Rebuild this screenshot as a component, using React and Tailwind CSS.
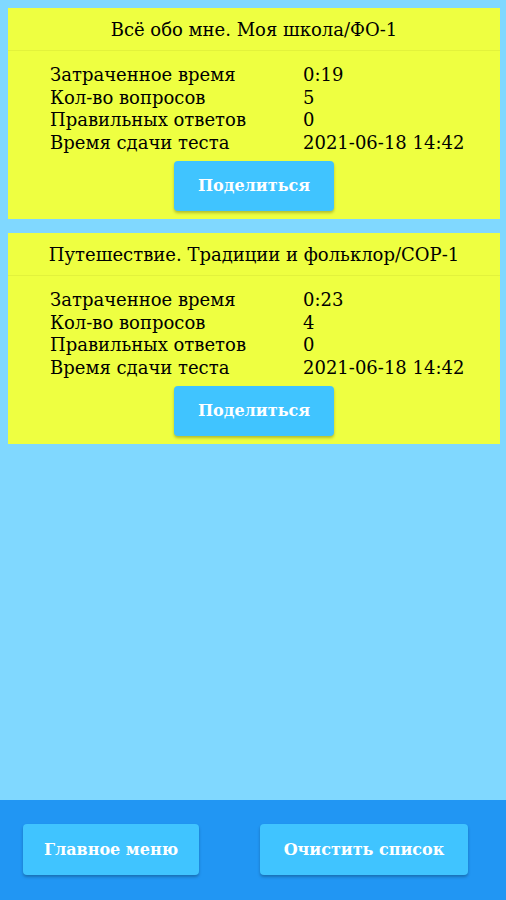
import React from "react";

const serif = { fontFamily: '"DejaVu Serif", "Liberation Serif", serif' };

function Card({ title, rows }) {
  return (
    <div className="ml-2 mr-[6px] bg-[#eeff41] flex flex-col">
      <div className="h-[43px] flex items-center justify-center border-b border-[#e2f23c] text-[18px] text-black">
        {title}
      </div>
      <div className="grid grid-cols-[253px_auto] pl-[42px] pt-[13px] text-[18px] leading-[22.5px] text-black">
        {rows.map(([l, v]) => (
          <React.Fragment key={l}>
            <div>{l}</div>
            <div>{v}</div>
          </React.Fragment>
        ))}
      </div>
      <div className="flex justify-center pt-[7px] pb-[8px]">
        <button className="w-[160px] h-[50px] rounded-[4px] bg-[#40c4ff] text-white font-bold text-[16px] shadow-[0_2px_3px_rgba(0,0,0,0.25)]">
          Поделиться
        </button>
      </div>
    </div>
  );
}

export default function App() {
  return (
    <div className="h-[900px] w-[506px] flex flex-col bg-[#80d8ff]" style={serif}>
      <div className="flex-1 flex flex-col pt-2 gap-[14px]">
        <Card
          title="Всё обо мне. Моя школа/ФО-1"
          rows={[
            ["Затраченное время", "0:19"],
            ["Кол-во вопросов", "5"],
            ["Правильных ответов", "0"],
            ["Время сдачи теста", "2021-06-18 14:42"],
          ]}
        />
        <Card
          title="Путешествие. Традиции и фольклор/СОР-1"
          rows={[
            ["Затраченное время", "0:23"],
            ["Кол-во вопросов", "4"],
            ["Правильных ответов", "0"],
            ["Время сдачи теста", "2021-06-18 14:42"],
          ]}
        />
      </div>
      <div className="h-[100px] bg-[#2196f3] flex items-start pt-[24px] pl-[23px] gap-[61px]">
        <button className="w-[176px] h-[51px] rounded-[4px] bg-[#40c4ff] text-white font-bold text-[16px] shadow-[0_2px_3px_rgba(0,0,0,0.25)]">
          Главное меню
        </button>
        <button className="w-[208px] h-[51px] rounded-[4px] bg-[#40c4ff] text-white font-bold text-[16px] shadow-[0_2px_3px_rgba(0,0,0,0.25)]">
          Очистить список
        </button>
      </div>
    </div>
  );
}
